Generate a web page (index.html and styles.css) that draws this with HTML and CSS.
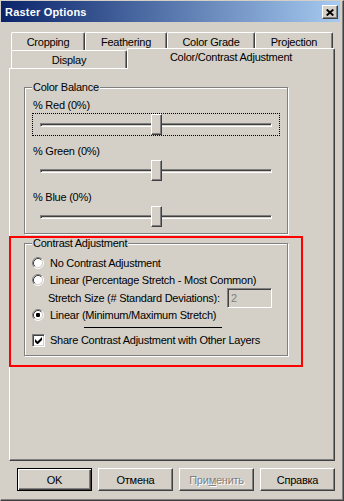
FILE: index.html
```html
<!DOCTYPE html>
<html>
<head>
<meta charset="utf-8">
<title>Raster Options</title>
<link rel="stylesheet" href="styles.css">
</head>
<body>
<div class="window">
  <div class="titlebar">
    <span class="title">Raster Options</span>
    <span class="close"><svg width="8" height="7" viewBox="0 0 8 7"><path d="M0.7 0.5 L7.3 6.5 M7.3 0.5 L0.7 6.5" stroke="#000" stroke-width="1.9" fill="none"/></svg></span>
  </div>
  <div class="tabs">
    <div class="tabrow first">
      <div class="tab w-crop">Cropping</div>
      <div class="tab w-feather">Feathering</div>
      <div class="tab w-grade">Color Grade</div>
      <div class="tab w-proj">Projection</div>
    </div>
    <div class="tabrow second">
      <div class="tab w-display">Display</div>
      <div class="tab selected w-color">Color/Contrast Adjustment</div>
    </div>
  </div>
  <div class="panel">
    <div class="group balance">
      <div class="legend">Color Balance</div>
      <div class="slider-block first-block">
        <div class="slider-label">% Red (0%)</div>
        <div class="slider focused"><div class="track"></div><div class="thumb"></div></div>
      </div>
      <div class="slider-block">
        <div class="slider-label">% Green (0%)</div>
        <div class="slider"><div class="track"></div><div class="thumb"></div></div>
      </div>
      <div class="slider-block">
        <div class="slider-label">% Blue (0%)</div>
        <div class="slider"><div class="track"></div><div class="thumb"></div></div>
      </div>
    </div>
    <div class="group contrast">
      <div class="legend">Contrast Adjustment</div>
      <div class="opt r1">
        <svg class="radio" width="12" height="12" viewBox="0 0 12 12"><circle cx="6" cy="6" r="4.5" fill="#fff"/><path d="M2.11 9.89 A5.5 5.5 0 0 1 9.89 2.11" stroke="#808080" fill="none"/><path d="M9.89 2.11 A5.5 5.5 0 0 1 2.11 9.89" stroke="#fff" fill="none"/><path d="M2.82 9.18 A4.5 4.5 0 0 1 9.18 2.82" stroke="#404040" fill="none"/><path d="M9.18 2.82 A4.5 4.5 0 0 1 2.82 9.18" stroke="#d4d0c8" fill="none"/></svg>
        <span>No Contrast Adjustment</span>
      </div>
      <div class="opt r2">
        <svg class="radio" width="12" height="12" viewBox="0 0 12 12"><circle cx="6" cy="6" r="4.5" fill="#fff"/><path d="M2.11 9.89 A5.5 5.5 0 0 1 9.89 2.11" stroke="#808080" fill="none"/><path d="M9.89 2.11 A5.5 5.5 0 0 1 2.11 9.89" stroke="#fff" fill="none"/><path d="M2.82 9.18 A4.5 4.5 0 0 1 9.18 2.82" stroke="#404040" fill="none"/><path d="M9.18 2.82 A4.5 4.5 0 0 1 2.82 9.18" stroke="#d4d0c8" fill="none"/></svg>
        <span>Linear (Percentage Stretch - Most Common)</span>
      </div>
      <div class="stretch">
        <span class="stretch-label">Stretch Size (# Standard Deviations):</span>
        <div class="input disabled">2</div>
      </div>
      <div class="opt r3">
        <svg class="radio" width="12" height="12" viewBox="0 0 12 12"><circle cx="6" cy="6" r="4.5" fill="#fff"/><path d="M2.11 9.89 A5.5 5.5 0 0 1 9.89 2.11" stroke="#808080" fill="none"/><path d="M9.89 2.11 A5.5 5.5 0 0 1 2.11 9.89" stroke="#fff" fill="none"/><path d="M2.82 9.18 A4.5 4.5 0 0 1 9.18 2.82" stroke="#404040" fill="none"/><path d="M9.18 2.82 A4.5 4.5 0 0 1 2.82 9.18" stroke="#d4d0c8" fill="none"/><rect x="4" y="4" width="4" height="4" rx="1.2" fill="#000"/></svg>
        <span>Linear (Minimum/Maximum Stretch)</span>
      </div>
      <div class="sep"></div>
      <div class="opt chk">
        <div class="checkbox"><svg width="7" height="7" viewBox="0 0 7 7"><path d="M0 2v3l2 2h1l4-4V0L2.5 4.5z" fill="#000"/></svg></div>
        <span>Share Contrast Adjustment with Other Layers</span>
      </div>
    </div>
  </div>
  <div class="buttons">
    <div class="btn default">OK</div>
    <div class="btn">Отмена</div>
    <div class="btn disabled">При<u>м</u>енить</div>
    <div class="btn">Справка</div>
  </div>
  <div class="highlight"></div>
</div>
</body>
</html>
```

FILE: styles.css
```css
* { box-sizing: border-box; }
html, body { margin: 0; padding: 0; }
body {
  background: #d4d0c8;
  font-family: "Liberation Sans", Arial, sans-serif;
  font-size: 11px;
  color: #000;
  letter-spacing: -0.25px;
}
.window {
  position: relative;
  width: 344px;
  height: 501px;
  background: #d4d0c8;
  border-style: solid;
  border-width: 1px;
  border-color: #d4d0c8 #404040 #404040 #d4d0c8;
  box-shadow: inset -1px -1px #808080;
  display: flex;
  flex-direction: column;
}
.titlebar {
  height: 21px;
  width: 339px;
  flex: none;
  background: linear-gradient(to right, #0a246a, #a6caf0);
  display: flex;
  align-items: center;
  justify-content: space-between;
  padding: 0 2px 0 4px;
}
.title {
  color: #fff;
  font-weight: bold;
  letter-spacing: 0.2px;
}
.close {
  width: 16px;
  height: 14px;
  margin-top: 1px;
  background: #d4d0c8;
  border: 1px solid;
  border-color: #fff #404040 #404040 #fff;
  box-shadow: inset -1px -1px #808080;
  display: flex;
  align-items: center;
  justify-content: center;
}
.close svg { display: block; }

.tabs {
  margin: 10px 0 0 10px;
  display: flex;
  flex-direction: column;
  flex: none;
}
.tabrow { display: flex; height: 18px; }
.tab {
  height: 18px;
  border-top: 1px solid #fff;
  border-left: 1px solid #fff;
  border-right: 1px solid #404040;
  box-shadow: inset -1px 0 #808080;
  border-radius: 2px 2px 0 0;
  text-align: center;
  padding-top: 1px;
  line-height: 16px;
  white-space: nowrap;
  background: #d4d0c8;
}
.second .tab { padding-top: 2px; line-height: 15px; }
.second .tab.selected {
  position: relative;
  z-index: 1;
  height: 21px;
  margin-top: -2px;
  margin-bottom: -1px;
  padding-top: 2px;
  line-height: 13px;
}
.w-crop { width: 74px; }
.w-feather { width: 82px; }
.w-grade { width: 88px; }
.w-proj { width: 78px; }
.w-display { width: 116px; }
.w-color { width: 208px; }

.panel {
  flex: none;
  margin-left: 8px;
  width: 326px;
  height: 393px;
  border-style: solid;
  border-width: 1px;
  border-color: #fff #404040 #404040 #fff;
  box-shadow: inset -1px -1px #808080;
  padding-left: 14px;
}
.group {
  width: 264px;
  border: 1px solid #808080;
  box-shadow: inset 1px 1px #fff, 1px 1px #fff;
  padding-left: 7px;
}
.legend {
  display: table;
  margin-top: -7px;
  line-height: 13px;
  padding: 0 1px;
  background: #d4d0c8;
}
.balance { margin-top: 18px; padding-bottom: 5px; }
.slider-block { margin-top: 9px; }
.slider-block.first-block { margin-top: 5px; }
.slider-label { line-height: 13px; padding-left: 1px; }
.slider {
  margin-top: 1px;
  width: 248px;
  height: 23px;
  border: 1px dotted transparent;
  display: grid;
}
.slider.focused { border-color: #000; }
.track {
  grid-area: 1 / 1;
  align-self: center;
  justify-self: center;
  width: 232px;
  height: 4px;
  border: 1px solid;
  border-color: #808080 #fff #fff #808080;
  box-shadow: inset 1px 1px #404040;
}
.thumb {
  grid-area: 1 / 1;
  align-self: center;
  justify-self: center;
  width: 11px;
  height: 21px;
  background: #d4d0c8;
  border: 1px solid;
  border-color: #fff #404040 #404040 #fff;
  box-shadow: inset -1px -1px #808080;
}

.contrast { margin-top: 9px; padding-bottom: 8px; }
.contrast .legend + .opt { margin-top: 4px; }
.opt {
  display: flex;
  align-items: center;
  height: 17px;
  white-space: nowrap;
}
.opt .radio { flex: none; margin-right: 6px; display: block; }
.opt.r3 { height: 14px; }
.stretch {
  display: flex;
  align-items: center;
  height: 20px;
  padding-left: 16px;
  white-space: nowrap;
}
.stretch-label { width: 179px; flex: none; }
.input {
  width: 45px;
  height: 20px;
  border: 1px solid;
  border-color: #808080 #fff #fff #808080;
  box-shadow: inset 1px 1px #404040, inset -1px -1px #d4d0c8;
  background: #d4d0c8;
  color: #808080;
  padding: 2px 0 0 3px;
  line-height: 14px;
}
.sep {
  margin: 5px 0 0 52px;
  width: 138px;
  height: 1px;
  background: #000;
}
.opt.chk { margin-top: 5px; height: 14px; }
.checkbox {
  flex: none;
  width: 13px;
  height: 13px;
  margin-right: 5px;
  border: 1px solid;
  border-color: #808080 #fff #fff #808080;
  box-shadow: inset 1px 1px #404040, inset -1px -1px #d4d0c8;
  background: #fff;
  display: flex;
  align-items: center;
  justify-content: center;
}
.checkbox svg { display: block; }

.buttons {
  flex: none;
  display: flex;
  gap: 6px;
  margin: 7px 0 0 16px;
}
.btn {
  width: 75px;
  height: 23px;
  border: 1px solid;
  border-color: #fff #404040 #404040 #fff;
  box-shadow: inset -1px -1px #808080;
  display: flex;
  align-items: center;
  justify-content: center;
  white-space: nowrap;
}
.btn.default {
  border-color: #000;
  box-shadow: inset 1px 1px #fff, inset -1px -1px #404040, inset -2px -2px #808080;
}
.btn.disabled {
  color: #808080;
  text-shadow: 1px 1px 0 #fff;
}
.highlight {
  position: absolute;
  left: 8px;
  top: 235px;
  width: 294px;
  height: 131px;
  border: 2px solid #ff0000;
}
```
